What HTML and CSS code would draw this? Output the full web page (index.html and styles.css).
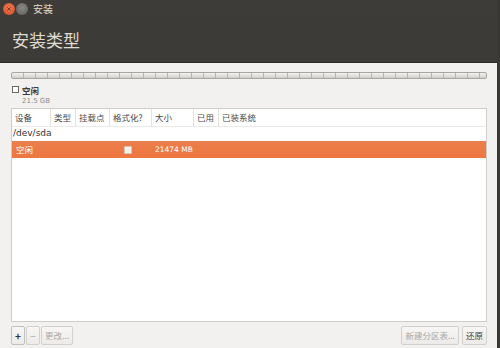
FILE: index.html
```html
<!DOCTYPE html>
<html>
<head>
<meta charset="utf-8">
<link rel="stylesheet" href="styles.css">
</head>
<body>
<div class="window">
  <div class="titlebar">
    <span class="wbtn close"><svg width="12" height="12" viewBox="0 0 12 12"><path d="M4.2 4.2 L7.8 7.8 M7.8 4.2 L4.2 7.8" stroke="#8a3a1c" stroke-width="1"/></svg></span>
    <span class="wbtn min"></span>
    <span class="title">安装</span>
  </div>
  <div class="header">安装类型</div>
  <div class="content">
    <div class="partbar"></div>
    <div class="legend">
      <span class="chk"></span>
      <div class="legend-text">
        <div class="lname">空闲</div>
        <div class="lsize">21.5 GB</div>
      </div>
    </div>
    <div class="table">
      <div class="thead">
        <div class="c c1">设备</div>
        <div class="c c2">类型</div>
        <div class="c c3">挂载点</div>
        <div class="c c4">格式化?</div>
        <div class="c c5">大小</div>
        <div class="c c6">已用</div>
        <div class="c c7 last">已装系统</div>
      </div>
      <div class="devrow">/dev/sda</div>
      <div class="selrow">
        <div class="c c1 s">空闲</div>
        <div class="c c2 s"></div>
        <div class="c c3 s"></div>
        <div class="c c4 s"><span class="rowchk"></span></div>
        <div class="c c5 s">21474 MB</div>
      </div>
    </div>
    <div class="buttons">
      <div class="left">
        <span class="btn sq plus">+</span>
        <span class="btn sq dis">−</span>
        <span class="btn dis">更改...</span>
      </div>
      <div class="right">
        <span class="btn dis">新建分区表...</span>
        <span class="btn">还原</span>
      </div>
    </div>
  </div>
</div>
</body>
</html>
```
FILE: styles.css
```css
* { box-sizing: border-box; }
html, body { margin: 0; padding: 0; }
body {
  width: 500px; height: 348px; overflow: hidden;
  font-family: "Noto Sans CJK SC", "DejaVu Sans", sans-serif;
  background: #3c3b37;
}
.window {
  width: 500px; height: 348px;
  display: flex; flex-direction: column;
  border-right: 3px solid #3a3835;
}
.titlebar {
  height: 17px; background: #3e3c38;
  display: flex; align-items: center;
  padding-left: 3px;
}
.wbtn {
  width: 12px; height: 12px; border-radius: 50%;
  display: inline-flex; margin-right: 1px;
}
.close { background: radial-gradient(circle at 50% 40%, #f07a52, #d24a22); }
.min { background: radial-gradient(circle at 50% 40%, #8a8884, #5f5d59); }
.title {
  color: #dfdbd2; font-size: 10px; margin-left: 4px; line-height: 12px;
}
.header {
  height: 46px; background: #3c3b37;
  color: #dfdbd2; font-size: 17px;
  padding: 12px 0 0 12px; line-height: 22px;
  border-bottom: 1px solid #2b2a27;
}
.content {
  flex: 1; background: #f2f1f0;
  padding: 9px 10px 0 11px;
  display: flex; flex-direction: column;
}
.partbar {
  height: 7px; width: 476px;
  border: 1px solid #a9a7a3; border-radius: 2px;
  background:
    repeating-linear-gradient(90deg, transparent 0 11px, #b8b6b2 11px 12px),
    linear-gradient(#f4f3f2, #d2d0cc);
}
.legend { display: flex; margin-top: 6px; margin-left: 1px; }
.chk {
  width: 7px; height: 7px; border: 1px solid #6b6964;
  background: #fff; margin-top: 1px; margin-right: 3px;
}
.lname { font-size: 8.5px; font-weight: bold; color: #3c3c3c; line-height: 11px; }
.lsize { font-size: 7px; color: #8d8b87; line-height: 9px; margin-top: 1px; font-family: "DejaVu Sans", sans-serif; }
.table {
  margin-top: 2px; width: 476px; height: 214px;
  background: #fff; border: 1px solid #cfcdc9;
}
.thead {
  display: flex; height: 18px; background: #fff;
  border-bottom: 1px solid #eceae7;
}
.c {
  font-size: 8.5px; color: #4a4a4a; line-height: 17px;
  padding-left: 3px; border-right: 1px solid #e3e1dd;
  white-space: nowrap;
}
.c.last, .c.s { border-right: none; }
.c1 { width: 39px; }
.c2 { width: 25px; }
.c3 { width: 34px; }
.c4 { width: 42px; }
.c5 { width: 42px; }
.c6 { width: 25px; }
.c7 { flex: 1; }
.devrow {
  height: 13px; font-size: 9px; line-height: 13px; color: #333;
  padding-left: 1px; font-family: "DejaVu Sans", sans-serif;
}
.selrow {
  display: flex; height: 17px; margin-top: 1px;
  background: linear-gradient(#e97f4c, #ef7640);
}
.selrow .c { color: #fff; line-height: 17px; }
.selrow .c1 { padding-left: 4px; }
.selrow .c5 { font-family: "DejaVu Sans", sans-serif; font-size: 7.5px; padding-left: 3px; }
.rowchk {
  display: inline-block; width: 8px; height: 8px; background: #f5efe9;
  border: 1px solid #d8c8bc; border-radius: 1px; margin-left: 11px; vertical-align: -1px;
}
.buttons {
  display: flex; justify-content: space-between;
  margin-top: 4px; width: 476px;
}
.left, .right { display: flex; gap: 1px; }
.right { gap: 3px; }
.btn {
  height: 19px; padding: 0 3px;
  border: 1px solid #d3d1cd; border-radius: 2px;
  background: linear-gradient(#f7f6f5, #ecebe9);
  font-size: 8.5px; line-height: 17px; color: #3c3c3c;
  display: inline-flex; align-items: center; justify-content: center;
}
.btn.sq { width: 14px; padding: 0; font-size: 10px; }
.btn.plus { font-weight: bold; color: #333; border-color: #c3c1bd; }
.btn.dis { color: #aaa8a4; }
```
